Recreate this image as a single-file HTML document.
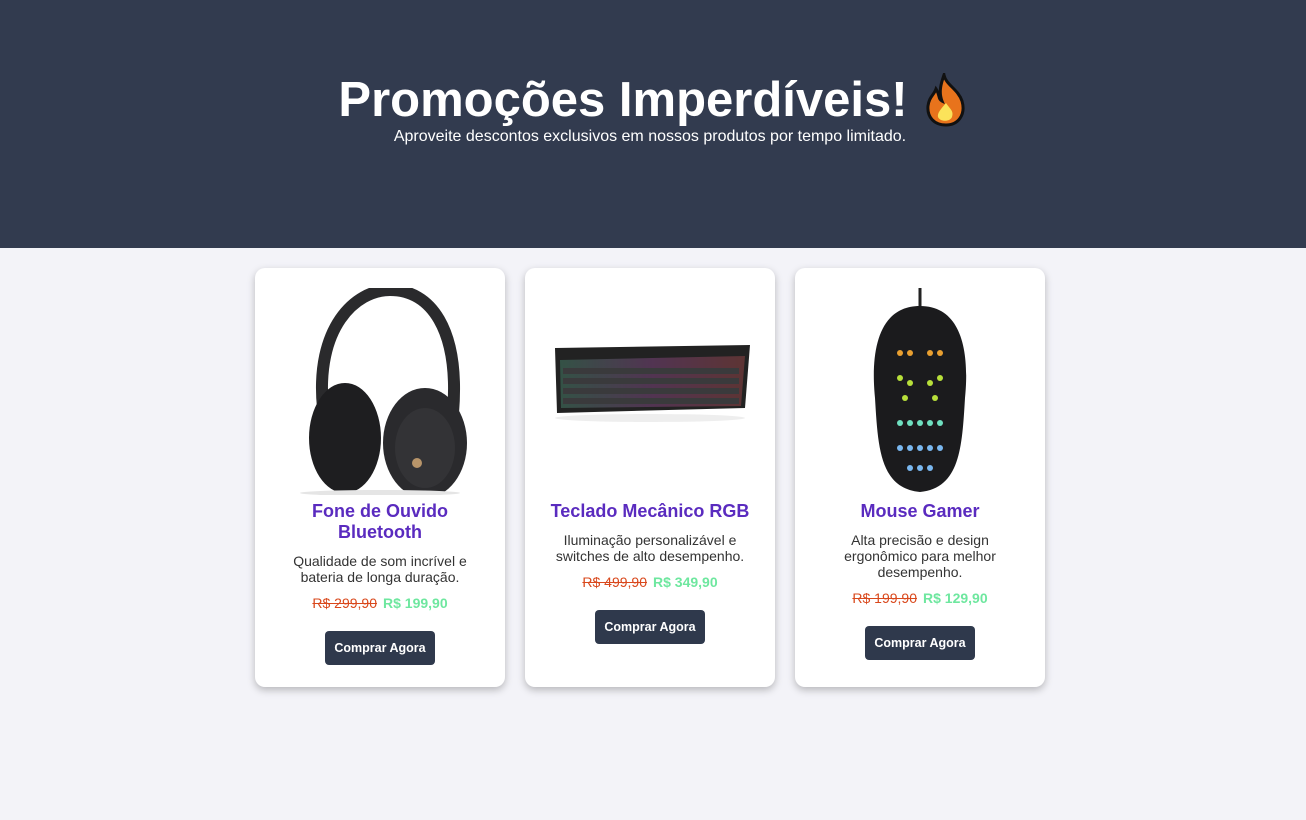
<!DOCTYPE html>
<html><head><meta charset="utf-8"><style>
*{box-sizing:border-box;margin:0;padding:0}
body{width:1306px;height:820px;background:#f3f3f8;font-family:"Liberation Sans",Arial,sans-serif;overflow:hidden}
header{height:248px;background:#323b4f;color:#fff;text-align:center;padding-top:72px}
h1{font-size:49px;font-weight:bold;line-height:56px;display:inline-flex;align-items:center;gap:16px}
header p{font-size:16px;margin-top:0;line-height:18px;margin-left:-6px}
.wrap{display:flex;gap:20px;margin-top:20px;margin-left:255px}
.card{width:250px;height:419px;background:#fff;border-radius:10px;box-shadow:0 3px 8px rgba(0,0,0,.25);padding:20px;text-align:center}
.img{height:207px;display:flex;align-items:center;justify-content:center}
h3{color:#5a2bbf;font-size:18px;line-height:21px;margin-top:6px}
.d{font-size:14px;color:#333;line-height:16px;margin-top:10px;padding:0 10px}
.pr{margin-top:10px;font-size:14px;line-height:16px}
.old{color:#d9481c;text-decoration:line-through;margin-right:6px}
.new{color:#6ee79f;font-weight:bold}
.btn{display:inline-block;margin-top:20px;background:#2f394c;color:#fff;font-size:12.5px;font-weight:bold;padding:9px 0;border-radius:4px;line-height:16px;width:110px;white-space:nowrap}
</style></head><body>
<header><h1>Promoções Imperdíveis!<svg width="44" height="54" viewBox="0 0 44 54"><path d="M20 2C22 12 34 16 38 28C42 42 34 52 22 52C10 52 3 44 4 33C5 24 10 22 12 16C16 22 14 26 18 28C14 18 18 8 20 2Z" fill="#e8731c" stroke="#111" stroke-width="3"/><path d="M22 30C26 36 30 38 28 44C26 49 16 49 14 44C13 40 17 36 22 30Z" fill="#fbe35a"/></svg></h1>
<p>Aproveite descontos exclusivos em nossos produtos por tempo limitado.</p></header>
<div class="wrap">
<div class="card"><div class="img"><svg width="190" height="207" viewBox="0 0 190 207"><path d="M38 120C30 40 70 2 105 2C145 2 175 40 168 125" fill="none" stroke="#2a2a2c" stroke-width="12"/><ellipse cx="60" cy="150" rx="36" ry="55" fill="#1e1e20"/><ellipse cx="140" cy="155" rx="42" ry="55" fill="#2a2a2d"/><ellipse cx="140" cy="160" rx="30" ry="40" fill="#333336"/><circle cx="132" cy="175" r="5" fill="#b8956a"/><ellipse cx="95" cy="205" rx="80" ry="3" fill="#e5e5e5"/></svg></div>
<h3>Fone de Ouvido Bluetooth</h3><p class="d">Qualidade de som incrível e bateria de longa duração.</p><p class="pr"><span class="old">R$ 299,90</span><span class="new">R$ 199,90</span></p><span class="btn">Comprar Agora</span></div>
<div class="card"><div class="img"><svg width="210" height="207" viewBox="0 0 210 207"><defs><linearGradient id="g" x1="0" x2="1"><stop offset="0" stop-color="#5a8"/><stop offset=".5" stop-color="#a5a"/><stop offset="1" stop-color="#c55"/></linearGradient></defs><path d="M10 60L205 57L200 120L12 125Z" fill="#222"/><path d="M15 72L200 68L196 118L16 120Z" fill="url(#g)" opacity=".35"/><g fill="#3a3a3c"><rect x="18" y="80" width="176" height="6"/><rect x="18" y="90" width="176" height="6"/><rect x="18" y="100" width="176" height="6"/><rect x="18" y="110" width="176" height="6"/></g><ellipse cx="105" cy="130" rx="95" ry="4" fill="#eee"/></svg></div>
<h3>Teclado Mecânico RGB</h3><p class="d">Iluminação personalizável e switches de alto desempenho.</p><p class="pr"><span class="old">R$ 499,90</span><span class="new">R$ 349,90</span></p><span class="btn">Comprar Agora</span></div>
<div class="card"><div class="img"><svg width="200" height="207" viewBox="0 0 200 207"><path d="M100 0V20" stroke="#222" stroke-width="3"/><path d="M100 18C60 18 50 60 55 110C58 160 60 200 100 204C140 200 142 160 145 110C150 60 140 18 100 18Z" fill="#1b1b1d"/><g fill="#e9a030"><circle cx="80" cy="65" r="3"/><circle cx="90" cy="65" r="3"/><circle cx="110" cy="65" r="3"/><circle cx="120" cy="65" r="3"/></g><g fill="#b8e03a"><circle cx="80" cy="90" r="3"/><circle cx="90" cy="95" r="3"/><circle cx="110" cy="95" r="3"/><circle cx="120" cy="90" r="3"/><circle cx="85" cy="110" r="3"/><circle cx="115" cy="110" r="3"/></g><g fill="#6fe0c0"><circle cx="80" cy="135" r="3"/><circle cx="90" cy="135" r="3"/><circle cx="100" cy="135" r="3"/><circle cx="110" cy="135" r="3"/><circle cx="120" cy="135" r="3"/></g><g fill="#7ab8f0"><circle cx="80" cy="160" r="3"/><circle cx="90" cy="160" r="3"/><circle cx="100" cy="160" r="3"/><circle cx="110" cy="160" r="3"/><circle cx="120" cy="160" r="3"/><circle cx="90" cy="180" r="3"/><circle cx="100" cy="180" r="3"/><circle cx="110" cy="180" r="3"/></g></svg></div>
<h3>Mouse Gamer</h3><p class="d">Alta precisão e design ergonômico para melhor desempenho.</p><p class="pr"><span class="old">R$ 199,90</span><span class="new">R$ 129,90</span></p><span class="btn">Comprar Agora</span></div>
</div>
</body></html>
